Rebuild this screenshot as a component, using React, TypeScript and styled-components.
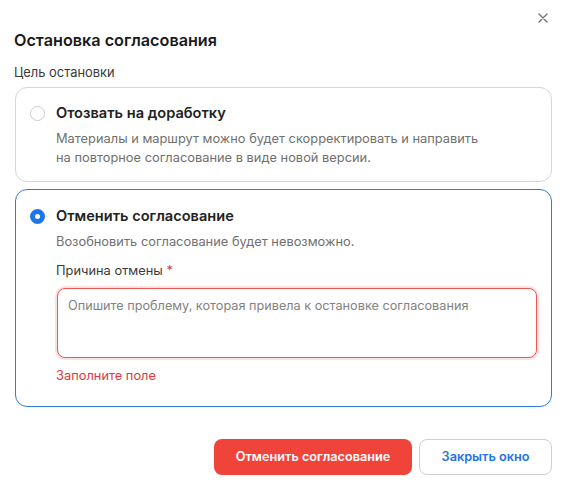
import styled, { createGlobalStyle } from "styled-components";
import { FC, useState } from "react";

const GlobalStyle = createGlobalStyle`
  html, body {
    margin: 0;
    padding: 0;
    background: #ffffff;
  }
  body {
    font-family: Inter, "Noto Sans", sans-serif;
    color: #1f1f1f;
    -webkit-font-smoothing: antialiased;
  }
  * {
    box-sizing: border-box;
  }
`;

interface OptionProps {
  active: boolean;
}

const options = [
  {
    id: "revise",
    title: "Отозвать на доработку",
    text: "Материалы и маршрут можно будет скорректировать и направить на повторное согласование в виде новой версии.",
  },
  {
    id: "cancel",
    title: "Отменить согласование",
    text: "Возобновить согласование будет невозможно.",
  },
];

const App: FC = () => {
  const [selected, setSelected] = useState<string>("cancel");
  const [reason, setReason] = useState<string>("");

  return (
    <Modal>
      <GlobalStyle />
      <Header>
        <Title>Остановка согласования</Title>
        <CloseButton aria-label="Закрыть">
          <svg width="10" height="10" viewBox="0 0 10 10">
            <path d="M1 1L9 9M9 1L1 9" stroke="#6f6f6f" strokeWidth="1.3" strokeLinecap="round" />
          </svg>
        </CloseButton>
      </Header>
      <Label>Цель остановки</Label>
      <Options>
        {options.map((option) => {
          const active = selected === option.id;
          return (
            <Option key={option.id} active={active} onClick={() => setSelected(option.id)}>
              <OptionHead>
                <Radio active={active} />
                <OptionTitle>{option.title}</OptionTitle>
              </OptionHead>
              <OptionBody>
                <Description>{option.text}</Description>
                {active && option.id === "cancel" && (
                  <Field>
                    <FieldLabel>
                      Причина отмены <Required>*</Required>
                    </FieldLabel>
                    <TextArea
                      value={reason}
                      onChange={(event) => setReason(event.target.value)}
                      placeholder="Опишите проблему, которая привела к остановке согласования"
                    />
                    <ErrorText>Заполните поле</ErrorText>
                  </Field>
                )}
              </OptionBody>
            </Option>
          );
        })}
      </Options>
      <Footer>
        <PrimaryButton>Отменить согласование</PrimaryButton>
        <SecondaryButton>Закрыть окно</SecondaryButton>
      </Footer>
    </Modal>
  );
};

const Modal = styled.div`
  width: 564px;
  padding: 10px 12px 14px 15px;
`;

const Header = styled.div`
  display: flex;
  justify-content: space-between;
  align-items: flex-start;
`;

const Title = styled.h1`
  margin: 19px 0 0 -1px;
  font-size: 16.2px;
  line-height: 22px;
  font-weight: 600;
  color: #1a1a1a;
`;

const CloseButton = styled.button`
  display: flex;
  align-items: center;
  justify-content: center;
  width: 16px;
  height: 16px;
  margin: 0 1px 0 0;
  padding: 0;
  border: none;
  background: none;
  cursor: pointer;
`;

const Label = styled.div`
  margin: 12px 0 0 -1px;
  font-size: 12.9px;
  line-height: 20px;
  color: #3a3a3a;
`;

const Options = styled.div`
  display: flex;
  flex-direction: column;
  gap: 7px;
  margin-top: 4px;
`;

const Option = styled.div<OptionProps>`
  padding: ${({ active }) => (active ? "15px 14px 20px 14px" : "14px 14px 14px 14px")};
  border: 1px solid ${({ active }) => (active ? "#2f7ae5" : "#d6d6d6")};
  border-radius: 12px;
  cursor: pointer;
`;

const OptionHead = styled.div`
  display: flex;
  align-items: center;
  gap: 11px;
  height: 22px;
`;

const Radio = styled.span<OptionProps>`
  flex: none;
  width: 15px;
  height: 15px;
  border-radius: 50%;
  background: #ffffff;
  border: ${({ active }) => (active ? "5px solid #1f75ea" : "1px solid #cccccc")};
`;

const OptionTitle = styled.div`
  font-size: 14.6px;
  line-height: 22px;
  font-weight: 600;
  color: #222222;
`;

const OptionBody = styled.div`
  padding-left: 26px;
  margin-top: 6px;
`;

const Description = styled.div`
  max-width: 430px;
  font-size: 12.85px;
  line-height: 18.5px;
  color: #707070;
`;

const Field = styled.div`
  display: flex;
  flex-direction: column;
  margin-top: 9px;
`;

const FieldLabel = styled.div`
  font-size: 12.85px;
  line-height: 20px;
  color: #3a3a3a;
`;

const Required = styled.span`
  color: #e5373c;
`;

const TextArea = styled.textarea`
  height: 70px;
  margin: 7px 0 0 1px;
  padding: 8px 10px;
  resize: none;
  border: 1px solid #ee5656;
  border-radius: 8px;
  box-shadow: 0 0 0 2px #fde1e0;
  outline: none;
  font-family: Inter, "Noto Sans", sans-serif;
  font-size: 12.7px;
  line-height: 18px;
  color: #222222;

  &::placeholder {
    color: #828282;
  }
`;

const ErrorText = styled.div`
  margin-top: 8px;
  font-size: 12.85px;
  line-height: 20px;
  color: #e0393e;
`;

const Footer = styled.div`
  display: flex;
  justify-content: flex-end;
  gap: 7px;
  margin-top: 32px;
`;

const PrimaryButton = styled.button`
  width: 198px;
  height: 36px;
  border: none;
  border-radius: 8px;
  background: #f0443b;
  color: #ffffff;
  font-family: Inter, "Noto Sans", sans-serif;
  font-size: 12.7px;
  font-weight: 600;
  cursor: pointer;
`;

const SecondaryButton = styled.button`
  width: 133px;
  height: 36px;
  border: 1px solid #cfcfcf;
  border-radius: 8px;
  background: #ffffff;
  color: #1f72e8;
  font-family: Inter, "Noto Sans", sans-serif;
  font-size: 12.7px;
  font-weight: 600;
  cursor: pointer;
`;

export default App;
